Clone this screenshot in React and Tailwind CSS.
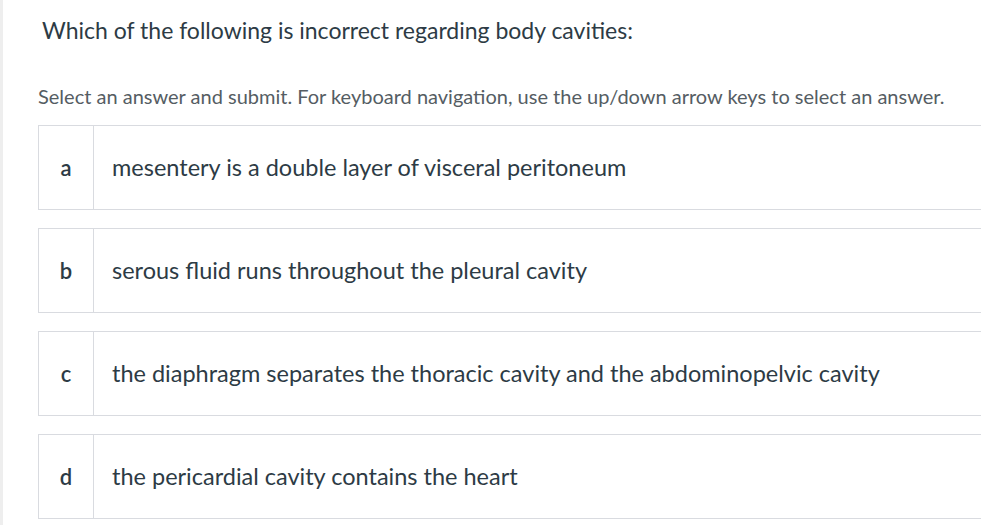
const answers = [
  { key: 'a', text: 'mesentery is a double layer of visceral peritoneum' },
  { key: 'b', text: 'serous fluid runs throughout the pleural cavity' },
  { key: 'c', text: 'the diaphragm separates the thoracic cavity and the abdominopelvic cavity' },
  { key: 'd', text: 'the pericardial cavity contains the heart' },
];

export default function App() {
  return (
    <div className="flex h-[525px] w-[981px] overflow-hidden bg-white text-[#2d3b45] font-['Lato',sans-serif]">
      <div className="w-[3px] shrink-0 bg-[#eeeeee]" />
      <div className="flex-1 pl-[35px]">
        <h1 className="mt-[14px] pl-[4px] text-[23px] leading-[32px]">
          Which of the following is incorrect regarding body cavities:
        </h1>
        <p className="mt-[37px] text-[20px] leading-[26px] text-[#555d63]">
          Select an answer and submit. For keyboard navigation, use the up/down arrow keys to select an answer.
        </p>
        <div className="mt-[16px] flex flex-col gap-[18px] -mr-[2px]">
          {answers.map((a) => (
            <div key={a.key} className="flex h-[85px] border border-[#d9dbe0]">
              <div className="flex w-[55px] shrink-0 items-center justify-center border-r border-[#d9dbe0] text-[22px] font-semibold">
                {a.key}
              </div>
              <div className="flex items-center pl-[18px] text-[23.5px]">
                {a.text}
              </div>
            </div>
          ))}
        </div>
      </div>
    </div>
  );
}
